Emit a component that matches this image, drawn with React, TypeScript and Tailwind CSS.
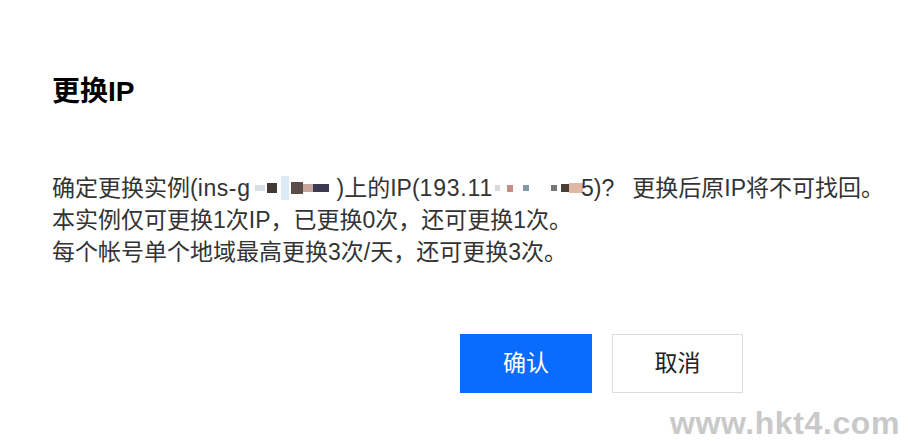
function Mosaic({ blocks, width }: { blocks: { w: number; h: number; c: string; gap: number }[]; width: number }) {
  return (
    <span className="inline-flex items-center h-[32px]" style={{ width }}>
      {blocks.map((b, i) => (
        <span key={i} className="shrink-0" style={{ width: b.w, height: b.h, background: b.c, marginLeft: b.gap }} />
      ))}
    </span>
  )
}

const idBlocks = [
  { w: 10, h: 6, c: '#d8dde6', gap: 4 },
  { w: 10, h: 10, c: '#443a35', gap: 2 },
  { w: 8, h: 24, c: '#dcecf7', gap: 4 },
  { w: 12, h: 12, c: '#5a4c49', gap: 2 },
  { w: 10, h: 8, c: '#c7a79c', gap: 0 },
  { w: 16, h: 8, c: '#3a3b52', gap: 0 },
]

const ipBlocks = [
  { w: 5, h: 6, c: '#dadada', gap: 2 },
  { w: 6, h: 7, c: '#c58b84', gap: 7 },
  { w: 6, h: 6, c: '#7f9aa3', gap: 10 },
  { w: 6, h: 6, c: '#777777', gap: 22 },
  { w: 8, h: 8, c: '#4a4038', gap: 4 },
  { w: 14, h: 10, c: '#e0b8a4', gap: 0 },
]

export default function App() {
  return (
    <div
      className="relative w-[908px] h-[441px] bg-white overflow-hidden text-[#222]"
      style={{ fontFamily: '"Liberation Sans", "Noto Sans CJK SC", sans-serif' }}
    >
      <div className="pl-[52px] pt-[72px]">
        <h1 className="text-[28px] font-bold leading-[40px] text-black">更换IP</h1>
        <div className="mt-[60px] text-[23px] leading-[32px] text-[#333] whitespace-nowrap">
          <p className="flex items-center">
            <span>确定更换实例(<span className="tracking-[0.6px]">ins-g</span></span>
            <Mosaic blocks={idBlocks} width={86} />
            <span>)上的IP(<span className="tracking-[0.8px]">193.11</span></span>
            <Mosaic blocks={ipBlocks} width={88} />
            <span>5)?</span>
            <span className="ml-[18px]">更换后原IP将不可找回。</span>
          </p>
          <p>本实例仅可更换1次IP，已更换0次，还可更换1次。</p>
          <p>每个帐号单个地域最高更换3次/天，还可更换3次。</p>
        </div>
        <div className="mt-[66px] flex gap-[20px] pl-[408px]">
          <button className="w-[132px] h-[59px] bg-[#0a6cff] text-white text-[23px]">确认</button>
          <button className="w-[131px] h-[59px] bg-white border border-[#dcdcdc] text-[#222] text-[23px]">取消</button>
        </div>
      </div>
      <div className="absolute right-[8px] bottom-[2px] text-[32px] leading-[32px] font-bold text-[#c9c9c9] tracking-[0.6px]">
        www.hkt4.com
      </div>
    </div>
  )
}
